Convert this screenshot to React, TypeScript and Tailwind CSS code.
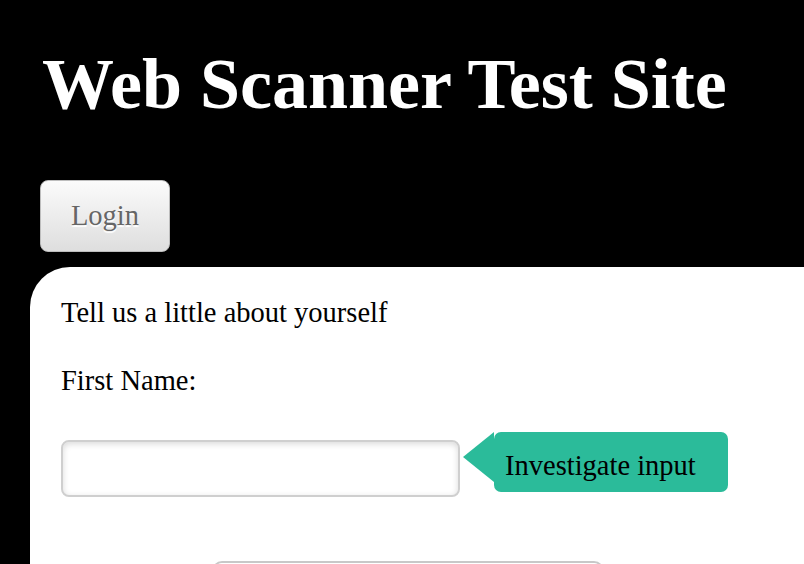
export default function App() {
  return (
    <div className="h-[564px] w-[804px] overflow-hidden bg-black" style={{ fontFamily: '"Liberation Serif", serif' }}>
      <div className="pl-[42px] pt-[40px]">
        <h1 className="text-[72px] font-bold leading-[88px] text-white">Web Scanner Test Site</h1>
      </div>
      <div className="pl-[40px] pt-[52px]">
        <button className="flex h-[72px] w-[130px] items-center justify-center rounded-[8px] border border-[#bdbdbd] bg-gradient-to-b from-[#fbfbfb] to-[#dedede] text-[28.5px] text-[#666] [text-shadow:0_2px_1px_#fff]">
          Login
        </button>
      </div>
      <div className="ml-[30px] mt-[15px] h-[400px] rounded-tl-[40px] bg-white pl-[31px] pt-[30px] text-black">
        <p className="text-[28.5px] leading-[32px]">Tell us a little about yourself</p>
        <p className="mt-[36px] text-[28.5px] leading-[32px]">First Name:</p>
        <div className="mt-[40px] flex items-start">
          <input className="mt-[3px] h-[57px] w-[399px] rounded-[8px] border-2 border-[#cfcfcf] bg-white shadow-[inset_0_2px_6px_rgba(0,0,0,0.15)] outline-none" />
          <div className="relative ml-[34px] mt-[-5px] flex h-[60px] w-[234px] items-center rounded-[7px] bg-[#2bbb9a] pl-[11px] pt-[8px] text-[28.5px]">
            <div className="absolute left-[-31px] top-0 h-0 w-0 border-y-[25px] border-r-[31px] border-y-transparent border-r-[#2bbb9a]" />
            Investigate input
          </div>
        </div>
        <div className="ml-[151px] mt-[64px] h-[40px] w-[392px] rounded-t-[10px] border-2 border-[#c8c8c8]" />
      </div>
    </div>
  );
}
